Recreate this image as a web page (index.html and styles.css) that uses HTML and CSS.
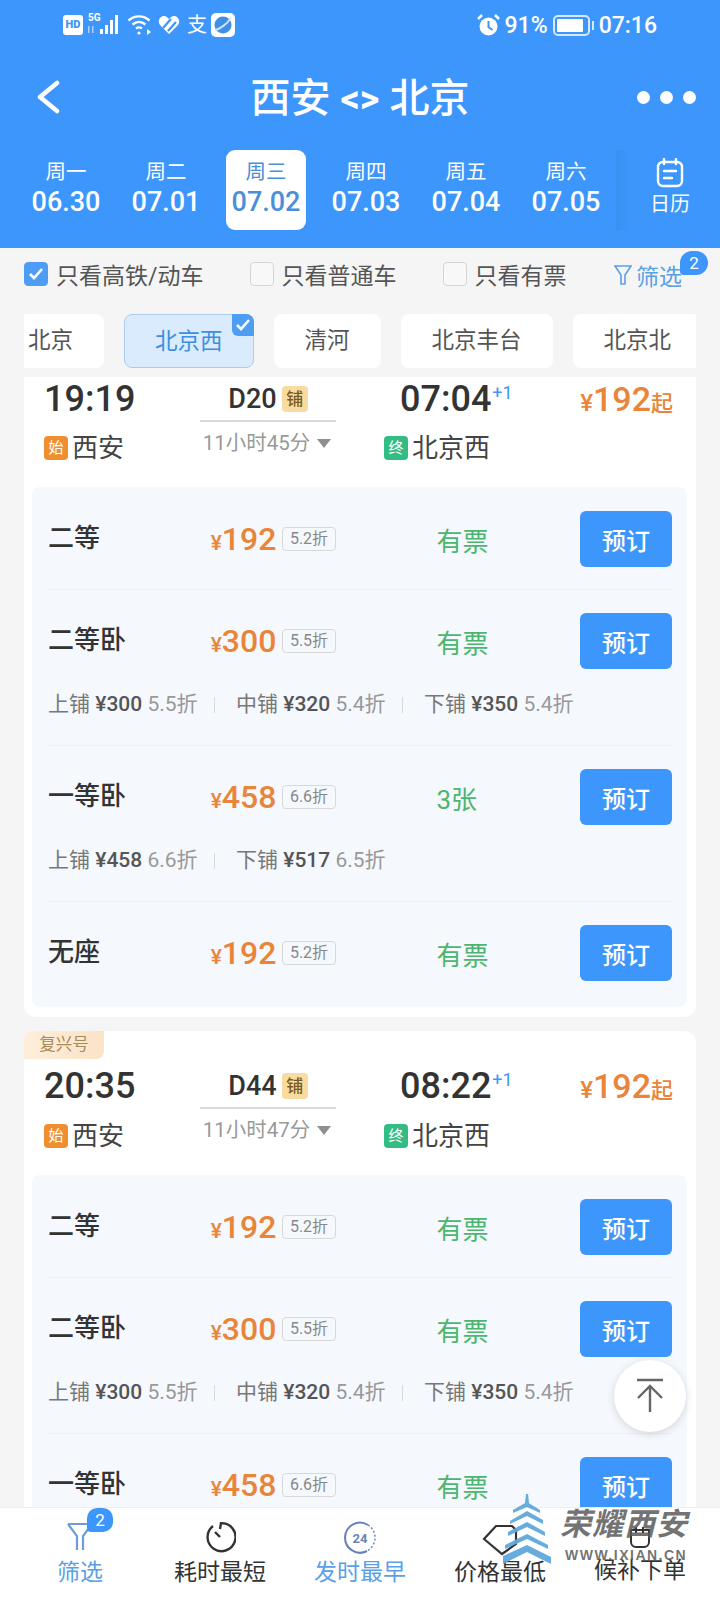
FILE: index.html
```html
<!DOCTYPE html>
<html lang="zh-CN">
<head>
  <meta charset="UTF-8">
  <meta name="viewport" content="width=device-width, initial-scale=1.0">
  <title>西安 &lt;&gt; 北京</title>
  <link rel="stylesheet" href="styles.css">
</head>
<body>
  <header class="top">
    <div class="status">
      <div class="status-left">
        <span class="hd">HD</span>
        <svg width="34" height="24" viewBox="0 0 34 24">
          <text x="0" y="8" class="sig-text">5G</text>
          <rect x="0" y="13" width="1.5" height="7" fill="#a9d0fb"/>
          <rect x="4" y="13" width="1.5" height="7" fill="#a9d0fb"/>
          <rect x="12" y="16" width="3" height="5" fill="#fff"/>
          <rect x="17" y="12" width="3" height="9" fill="#fff"/>
          <rect x="22" y="7" width="3" height="14" fill="#fff"/>
          <rect x="27" y="2" width="3" height="19" fill="#fff"/>
        </svg>
        <svg width="26" height="22" viewBox="0 0 26 22" fill="none" stroke="#fff" stroke-width="2.4">
          <path d="M1.500 6.500C7.500 1 16.500 1 22.500 6.500"/>
          <path d="M5.500 10.500C9.500 7 14.500 7 18.500 10.500"/>
          <path d="M9 14.500C11 13 13 13 15 14.500"/>
          <circle cx="12" cy="19" r="1.600" fill="#fff" stroke="none"/>
          <path d="M20 15l4 3-4 3z" fill="#fff" stroke="none"/>
        </svg>
        <svg width="22" height="20" viewBox="0 0 22 20">
          <path d="M11 19L2 10C-1 6 2 1 6 1c2 0 3 1 5 3 2-2 3-3 5-3 4 0 7 5 4 9z" fill="#fff"/>
          <path d="M5 13L13 4M10 16L18 7" stroke="#3c96fb" stroke-width="2.200"/>
        </svg>
        <span class="zhi">支</span>
        <svg class="browser" width="24" height="24" viewBox="0 0 24 24">
          <rect width="24" height="24" rx="5" fill="#fff"/>
          <circle cx="12" cy="12" r="8.500" fill="#3f8fe6"/>
          <path d="M4 17C9 16 16 11 20 5" stroke="#cfe4fb" stroke-width="2" fill="none"/>
        </svg>
      </div>
      <div class="status-right">
        <svg width="23" height="24" viewBox="0 0 23 24">
          <circle cx="11.500" cy="13.500" r="9" fill="#fff"/>
          <path d="M11.500 8v6l4 3" stroke="#3c96fb" stroke-width="2" fill="none"/>
          <path d="M1 6l4-4M22 6l-4-4" stroke="#fff" stroke-width="2.500"/>
        </svg>
        <span class="pct">91%</span>
        <span class="batt"><i></i></span>
        <span class="clock">07:16</span>
      </div>
    </div>

    <div class="title-row">
      <svg class="back" width="24" height="34" viewBox="0 0 24 34" fill="none" stroke="#fff" stroke-width="4.500" stroke-linecap="round" stroke-linejoin="round">
        <path d="M21 3L4 17l17 14"/>
      </svg>
      <h1>西安 <span>&lt;&gt;</span> 北京</h1>
      <div class="dots"><i></i><i></i><i></i></div>
    </div>

    <div class="dates">
      <div class="date"><span>周一</span><b>06.30</b></div>
      <div class="date"><span>周二</span><b>07.01</b></div>
      <div class="date on"><span>周三</span><b>07.02</b></div>
      <div class="date"><span>周四</span><b>07.03</b></div>
      <div class="date"><span>周五</span><b>07.04</b></div>
      <div class="date"><span>周六</span><b>07.05</b></div>
      <div class="cal">
        <svg width="30" height="30" viewBox="0 0 30 30" fill="none" stroke="#fff" stroke-width="2.400" stroke-linecap="round">
          <rect x="3" y="4" width="24" height="24" rx="5"/>
          <path d="M9 1v5M21 1v5M9 13h12M9 20h8"/>
        </svg>
        <span>日历</span>
      </div>
    </div>
  </header>

  <div class="filters">
    <label class="chk"><i class="box on"><svg width="16" height="14" viewBox="0 0 16 14" fill="none" stroke="#fff" stroke-width="2.600"><path d="M2 7l4 4 8-9"/></svg></i>只看高铁/动车</label>
    <label class="chk"><i class="box"></i>只看普通车</label>
    <label class="chk"><i class="box"></i>只看有票</label>
    <div class="filter-btn">
      <svg width="18" height="22" viewBox="0 0 18 22" fill="none" stroke="#5b9fe6" stroke-width="1.600">
        <path d="M1 2h16l-6 9v9H7v-9z"/>
      </svg>
      筛选
      <em class="badge">2</em>
    </div>
  </div>

  <div class="tabs">
    <div class="tab first">北京</div>
    <div class="tab on">北京西
      <i class="tick"><svg width="16" height="14" viewBox="0 0 16 14" fill="none" stroke="#fff" stroke-width="2.600"><path d="M2 7l4 4 8-9"/></svg></i>
    </div>
    <div class="tab">清河</div>
    <div class="tab">北京丰台</div>
    <div class="tab">北京北</div>
  </div>

  <main class="list">
    <section class="card">
      <div class="train">
        <div class="t-from">
          <div class="time">19:19</div>
          <div class="st"><i class="st-tag start">始</i>西安</div>
        </div>
        <div class="t-mid">
          <div class="no">D20 <i class="bed">铺</i></div>
          <div class="dur">11小时45分<i class="tri"></i></div>
        </div>
        <div class="t-to">
          <div class="time">07:04<sup>+1</sup></div>
          <div class="st"><i class="st-tag end">终</i>北京西</div>
        </div>
        <div class="t-price"><small>¥</small>192<small class="qi">起</small></div>
      </div>
      <div class="seats">
        <div class="seat">
          <div class="seat-main">
            <span class="name">二等</span>
            <span class="price"><small>¥</small>192</span><span class="off">5.2折</span>
            <span class="left">有票</span>
            <button class="book">预订</button>
          </div>
        </div>
        <div class="seat">
          <div class="seat-main">
            <span class="name">二等卧</span>
            <span class="price"><small>¥</small>300</span><span class="off">5.5折</span>
            <span class="left">有票</span>
            <button class="book">预订</button>
          </div>
          <div class="berths">
            <span class="berth">上铺 <b>¥300</b> <em>5.5折</em></span>
            <span class="berth">中铺 <b>¥320</b> <em>5.4折</em></span>
            <span class="berth">下铺 <b>¥350</b> <em>5.4折</em></span>
          </div>
        </div>
        <div class="seat">
          <div class="seat-main">
            <span class="name">一等卧</span>
            <span class="price"><small>¥</small>458</span><span class="off">6.6折</span>
            <span class="left">3张</span>
            <button class="book">预订</button>
          </div>
          <div class="berths">
            <span class="berth">上铺 <b>¥458</b> <em>6.6折</em></span>
            <span class="berth">下铺 <b>¥517</b> <em>6.5折</em></span>
          </div>
        </div>
        <div class="seat">
          <div class="seat-main">
            <span class="name">无座</span>
            <span class="price"><small>¥</small>192</span><span class="off">5.2折</span>
            <span class="left">有票</span>
            <button class="book">预订</button>
          </div>
        </div>
      </div>
    </section>

    <section class="card">
      <div class="fx-tag">复兴号</div>
      <div class="train loose">
        <div class="t-from">
          <div class="time">20:35</div>
          <div class="st"><i class="st-tag start">始</i>西安</div>
        </div>
        <div class="t-mid">
          <div class="no">D44 <i class="bed">铺</i></div>
          <div class="dur">11小时47分<i class="tri"></i></div>
        </div>
        <div class="t-to">
          <div class="time">08:22<sup>+1</sup></div>
          <div class="st"><i class="st-tag end">终</i>北京西</div>
        </div>
        <div class="t-price"><small>¥</small>192<small class="qi">起</small></div>
      </div>
      <div class="seats">
        <div class="seat">
          <div class="seat-main">
            <span class="name">二等</span>
            <span class="price"><small>¥</small>192</span><span class="off">5.2折</span>
            <span class="left">有票</span>
            <button class="book">预订</button>
          </div>
        </div>
        <div class="seat">
          <div class="seat-main">
            <span class="name">二等卧</span>
            <span class="price"><small>¥</small>300</span><span class="off">5.5折</span>
            <span class="left">有票</span>
            <button class="book">预订</button>
          </div>
          <div class="berths">
            <span class="berth">上铺 <b>¥300</b> <em>5.5折</em></span>
            <span class="berth">中铺 <b>¥320</b> <em>5.4折</em></span>
            <span class="berth">下铺 <b>¥350</b> <em>5.4折</em></span>
          </div>
        </div>
        <div class="seat">
          <div class="seat-main">
            <span class="name">一等卧</span>
            <span class="price"><small>¥</small>458</span><span class="off">6.6折</span>
            <span class="left">有票</span>
            <button class="book">预订</button>
          </div>
        </div>
      </div>
    </section>
  </main>

  <nav class="nav">
    <div class="nav-item blue">
      <div class="nav-icon">
        <svg width="28" height="30" viewBox="0 0 28 30" fill="none" stroke="#6f9bd6" stroke-width="2.200">
          <path d="M2 3h24l-9 12v14M11 29V15L2 3"/>
        </svg>
        <em class="nav-badge">2</em>
      </div>
      筛选
    </div>
    <div class="nav-item">
      <div class="nav-icon">
        <svg width="32" height="32" viewBox="0 0 32 32" fill="none" stroke="#333" stroke-width="2.400">
          <path d="M9 5A14 14 0 1 0 17 2.100L16 8"/>
          <path d="M11 11l5 5"/>
        </svg>
      </div>
      耗时最短
    </div>
    <div class="nav-item blue">
      <div class="nav-icon">
        <svg width="34" height="34" viewBox="0 0 34 34" fill="none" stroke="#6b82b8" stroke-width="2">
          <path d="M25 4A15 15 0 1 0 24 30"/>
          <path d="M25 4A15 15 0 0 1 24 30" stroke-dasharray="2 2" stroke-width="1.400"/>
          <text x="17" y="22" class="ic-24">24</text>
        </svg>
      </div>
      发时最早
    </div>
    <div class="nav-item">
      <div class="nav-icon">
        <svg width="36" height="36" viewBox="0 0 36 36" fill="none" stroke="#333" stroke-width="2.200">
          <path d="M14 5h16l4 4v14L20 33 2 18z"/>
        </svg>
      </div>
      价格最低
    </div>
    <div class="nav-item up">
      <div class="nav-icon">
        <svg width="30" height="30" viewBox="0 0 30 30" fill="none" stroke="#333" stroke-width="2">
          <path d="M5 11h20M11 8v6M18 8v6"/>
          <path d="M6 11v12a5 5 0 0 0 5 5h8a5 5 0 0 0 5-5V11"/>
        </svg>
      </div>
      候补下单
    </div>
  </nav>

  <button class="to-top" aria-label="回到顶部">
    <svg width="32" height="36" viewBox="0 0 32 36" fill="none" stroke="#666" stroke-width="2.400">
      <path d="M3 2h26M16 34V10M4 20L16 8l12 12"/>
    </svg>
  </button>

  <div class="mark">
    <svg width="48" height="70" viewBox="0 0 48 70" fill="#5fa8dc">
      <path d="M23 0l2 0 1 9h-4z"/>
      <path d="M24 8l13 8v3L24 13 10 19v-3z"/>
      <path d="M24 17l16 9v4L24 22 7 30v-3z"/>
      <path d="M24 28l18 10v4L24 33 5 42v-4z"/>
      <path d="M24 40l21 11v4L24 45 2 55v-4z"/>
      <path d="M24 51l24 12v7L24 58 0 70v-8z"/>
    </svg>
    <div class="mark-text">
      <div class="mark-name">荣耀西安</div>
      <div class="mark-url">WWW.IXIAN.CN</div>
    </div>
  </div>
</body>
</html>
```

FILE: styles.css
```css
* {
  box-sizing: border-box;
}
html, body {
  margin: 0;
  height: 100%;
}
body {
  position: relative;
  width: 720px;
  height: 1600px;
  overflow: hidden;
  display: flex;
  flex-direction: column;
  background-color: #f5f5f5;
  color: #333;
  font-family: Roboto, "Noto Sans CJK SC", sans-serif;
}
i, em {
  font-style: normal;
}

/* header */
.top {
  height: 248px;
  flex: none;
  background-color: #3c96fb;
  color: #fff;
}
.status {
  height: 50px;
  padding: 0 63px;
  display: flex;
  justify-content: space-between;
  align-items: center;
}
.status-left {
  display: flex;
  align-items: center;
  gap: 5px;
}
.hd {
  width: 20px;
  height: 20px;
  background: #fff;
  color: #3c96fb;
  border-radius: 3px;
  font-size: 11px;
  font-weight: 900;
  line-height: 20px;
  text-align: center;
}
.sig-text {
  fill: #fff;
  font-size: 10px;
  font-weight: 700;
}
.zhi {
  font-size: 20px;
  line-height: 24px;
  margin-left: 2px;
}
.browser {
  margin-left: -1px;
}
.status-right {
  display: flex;
  align-items: center;
}
.pct {
  margin-left: 5px;
  font-size: 23px;
  font-weight: 500;
}
.batt {
  position: relative;
  margin-left: 5px;
  width: 37px;
  height: 21px;
  border: 2px solid #d6e9fe;
  border-radius: 5px;
  padding: 2px;
  display: block;
}
.batt i {
  display: block;
  width: 90%;
  height: 100%;
  background: #fff;
  border-radius: 1px;
}
.batt::after {
  content: "";
  position: absolute;
  right: -6px;
  top: 4px;
  width: 2px;
  height: 9px;
  background: #d6e9fe;
}
.clock {
  margin-left: 9px;
  font-size: 23px;
  font-weight: 500;
}

.title-row {
  position: relative;
  height: 96px;
  display: flex;
  align-items: center;
  justify-content: center;
}
.title-row h1 {
  margin: 0;
  padding-top: 2px;
  font-size: 40px;
  font-weight: 500;
  line-height: 94px;
}
.title-row h1 span {
  font-size: 38px;
  font-weight: 700;
}
.back {
  position: absolute;
  left: 36px;
  top: 30px;
}
.dots {
  position: absolute;
  right: 24px;
  top: 41px;
  display: flex;
  gap: 10px;
}
.dots i {
  width: 13px;
  height: 13px;
  border-radius: 50%;
  background: #fff;
}

.dates {
  padding-left: 16px;
  height: 80px;
  margin-top: 4px;
  display: flex;
  align-items: center;
}
.date {
  width: 100px;
  display: flex;
  flex-direction: column;
  align-items: center;
  height: 80px;
  padding-top: 8px;
}
.date span {
  font-size: 20.500px;
  line-height: 28px;
}
.date b {
  font-size: 27px;
  font-weight: 500;
  line-height: 33px;
}
.date.on {
  width: 80px;
  margin: 0 10px;
  background: #fff;
  color: #4a8fd8;
  border-radius: 9px;
}
.cal {
  width: 104px;
  height: 80px;
  padding: 8px 0 0 4px;
  display: flex;
  flex-direction: column;
  align-items: center;
  background: linear-gradient(90deg, #3890f2, #3c96fb 12px);
}
.cal span {
  font-size: 20px;
  line-height: 26px;
  margin-top: 3px;
}

/* filters */
.filters {
  flex: none;
  height: 65px;
  padding: 0 0 14px 24px;
  display: flex;
  align-items: center;
  position: relative;
  font-size: 23px;
  color: #555;
}
.chk {
  display: flex;
  align-items: center;
  margin-right: 46px;
}
.box {
  width: 24px;
  height: 24px;
  margin-right: 8px;
  border: 1px solid #d5d5d5;
  border-radius: 4px;
  background: #f8f8f8;
  display: flex;
  align-items: center;
  justify-content: center;
}
.box.on {
  background: #4d9df5;
  border-color: #4d9df5;
}
.filter-btn {
  position: absolute;
  left: 614px;
  top: 10px;
  display: flex;
  align-items: center;
  gap: 4px;
  color: #5b9fe6;
}
.badge {
  position: absolute;
  left: 66px;
  top: -7px;
  width: 28px;
  height: 24px;
  border-radius: 12px 12px 12px 4px;
  background: #3c96fb;
  color: #fff;
  font-size: 17px;
  line-height: 24px;
  text-align: center;
}

/* station tabs */
.tabs {
  flex: none;
  height: 54px;
  margin: 1px 24px 0;
  display: flex;
  gap: 20px;
  overflow: hidden;
}
.tab {
  flex: none;
  position: relative;
  padding: 0 31px;
  height: 54px;
  line-height: 52px;
  background: #fff;
  border-radius: 8px;
  font-size: 22.500px;
  color: #555;
}
.tab.first {
  margin-left: -27px;
}
.tab.on {
  background: #d9ebfd;
  border: 1px solid #abcdef;
  color: #3c8fe0;
  padding: 0 30px;
}
.tick {
  position: absolute;
  right: -1px;
  top: -1px;
  width: 22px;
  height: 22px;
  background: #4d9df5;
  border-radius: 0 8px 0 6px;
  display: flex;
  align-items: center;
  justify-content: center;
}

/* train list */
.list {
  flex: 1;
  min-height: 0;
  margin: 9px 24px 0;
  overflow: hidden;
}
.card {
  position: relative;
  background: #fff;
  border-radius: 0 0 12px 12px;
  padding: 0 8px 10px;
  margin-bottom: 14px;
}
.card + .card {
  border-radius: 12px;
  padding-top: 33px;
}
.fx-tag {
  position: absolute;
  left: 0;
  top: 0;
  width: 80px;
  height: 28px;
  background: linear-gradient(90deg, #fdeedb, #fbe3c6);
  border-radius: 8px 0 8px 0;
  color: #a98a5a;
  font-size: 16.500px;
  line-height: 28px;
  text-align: center;
}
.train {
  height: 110px;
  display: flex;
  padding-left: 12px;
  position: relative;
}
.train.loose {
  height: 111px;
}
.time {
  font-size: 36px;
  font-weight: 500;
  line-height: 44px;
  color: #333;
}
.time sup {
  font-size: 18px;
  font-weight: 400;
  color: #3c96fb;
  line-height: 0;
  vertical-align: 12px;
  margin-left: 1px;
}
.st {
  display: flex;
  align-items: center;
  margin-top: 12px;
  font-size: 26px;
  line-height: 30px;
  color: #444;
}
.loose .st {
  margin-top: 13px;
}
.st-tag {
  width: 24px;
  height: 24px;
  margin-right: 4px;
  border-radius: 4px;
  color: #fff;
  font-size: 15px;
  line-height: 24px;
  text-align: center;
}
.st-tag.start {
  background: #f08f31;
}
.st-tag.end {
  background: #32bd85;
}
.t-from {
  width: 150px;
}
.t-mid {
  width: 148px;
  text-align: center;
}
.no {
  height: 45px;
  border-bottom: 2px solid #d9d9d9;
  padding: 6px 0 0 0;
  margin: 0 6px;
  font-size: 27px;
  font-weight: 500;
  line-height: 32px;
  display: flex;
  justify-content: center;
  gap: 5px;
}
.bed {
  width: 26px;
  height: 26px;
  margin-top: 3px;
  border-radius: 4px;
  background: #f8dc9f;
  color: #7a5c22;
  font-size: 17px;
  line-height: 26px;
  font-weight: 500;
}
.dur {
  margin-top: 7px;
  padding-right: 2px;
  font-size: 20.500px;
  line-height: 28px;
  color: #999;
  display: flex;
  justify-content: center;
  align-items: center;
  gap: 7px;
}
.tri {
  width: 0;
  height: 0;
  border: 7px solid transparent;
  border-top: 9px solid #8f8f8f;
  border-bottom: 0;
}
.t-to {
  width: 212px;
  padding-left: 42px;
}
.t-to .time {
  padding-left: 16px;
}
.t-price {
  flex: 1;
  margin-right: 15px;
  text-align: right;
  font-size: 34px;
  font-weight: 500;
  line-height: 44px;
  color: #e9853a;
  white-space: nowrap;
}
.t-price small {
  font-size: 24px;
}
.t-price .qi {
  font-size: 22px;
}

/* seats panel */
.seats {
  background: #f5f8fc;
  border-radius: 8px;
  padding: 1px 15px 4px 16px;
  width: 655px;
}
.seat {
  padding: 23px 0 22px;
  border-bottom: 1px solid #ecf0f5;
}
.seat:last-child {
  border-bottom: 0;
}
.seat-main {
  height: 56px;
  display: flex;
  align-items: center;
}
.name {
  width: 163px;
  font-size: 26px;
  font-weight: 500;
  margin-top: -8px;
  color: #333;
}
.price {
  width: 71px;
  font-size: 32px;
  font-weight: 500;
  color: #e9853a;
  white-space: nowrap;
}
.price small {
  font-size: 21px;
}
.off {
  width: 55px;
  height: 24px;
  border: 1px solid #d8d8d8;
  border-radius: 4px;
  font-size: 16px;
  line-height: 22px;
  color: #888;
  text-align: center;
}
.left {
  margin-left: 100px;
  width: 144px;
  font-size: 26px;
  color: #4cb56f;
}
.book {
  width: 92px;
  height: 56px;
  padding: 0;
  border: 0;
  border-radius: 6px;
  background: #3c96fb;
  color: #fff;
  font-family: inherit;
  font-size: 24px;
  font-weight: 500;
}
.berths {
  display: flex;
  margin-top: 20px;
  height: 30px;
  margin-bottom: 4px;
  align-items: center;
  font-size: 21px;
  line-height: 30px;
  color: #777;
}
.berth {
  width: 188px;
  position: relative;
  white-space: nowrap;
}
.berth b {
  font-weight: 500;
  color: #555;
}
.berth em {
  color: #999;
}
.berth + .berth::before {
  content: "";
  position: absolute;
  left: -22px;
  top: 8px;
  width: 1px;
  height: 16px;
  background: #d9d9d9;
}

/* bottom nav */
.nav {
  flex: none;
  height: 93px;
  padding: 0 10px;
  background: #fff;
  border-top: 1px solid #eee;
  display: flex;
  position: relative;
}
.nav-item {
  width: 140px;
  height: 77px;
  overflow: hidden;
  display: flex;
  flex-direction: column;
  align-items: center;
  font-size: 23px;
  line-height: 30px;
  color: #333;
}
.nav-item.blue {
  color: #5b9fe6;
}
.nav-item.up {
  margin-top: -2px;
  height: 79px;
}
.nav-icon {
  position: relative;
  flex: none;
  height: 50px;
  padding-top: 13px;
  display: flex;
  justify-content: center;
}
.nav-badge {
  position: absolute;
  left: 21px;
  top: 0;
  width: 26px;
  height: 24px;
  border-radius: 10px 10px 10px 4px;
  background: #3c96fb;
  color: #fff;
  font-size: 17px;
  line-height: 24px;
  text-align: center;
}
.ic-24 {
  fill: #6b82b8;
  stroke: none;
  font-size: 13px;
  font-weight: 700;
  text-anchor: middle;
}

/* overlays */
.to-top {
  position: absolute;
  left: 614px;
  top: 1360px;
  width: 72px;
  height: 72px;
  padding: 0;
  border: 0;
  border-radius: 50%;
  background: #fff;
  box-shadow: 0 2px 8px rgba(0, 0, 0, 0.14);
  display: flex;
  align-items: center;
  justify-content: center;
}
.mark {
  position: absolute;
  left: 503px;
  top: 1494px;
  display: flex;
  gap: 9px;
  pointer-events: none;
}
.mark svg {
  opacity: 0.95;
}
.mark-text {
  padding-top: 12px;
  color: rgba(90, 90, 90, 0.85);
}
.mark-name {
  font-size: 31px;
  line-height: 38px;
  font-weight: 700;
  font-style: italic;
  letter-spacing: 1px;
}
.mark-url {
  margin-top: 2px;
  padding-left: 5px;
  font-size: 14px;
  line-height: 18px;
  font-weight: 700;
  letter-spacing: 1.500px;
  font-family: "Liberation Sans", sans-serif;
}
```
